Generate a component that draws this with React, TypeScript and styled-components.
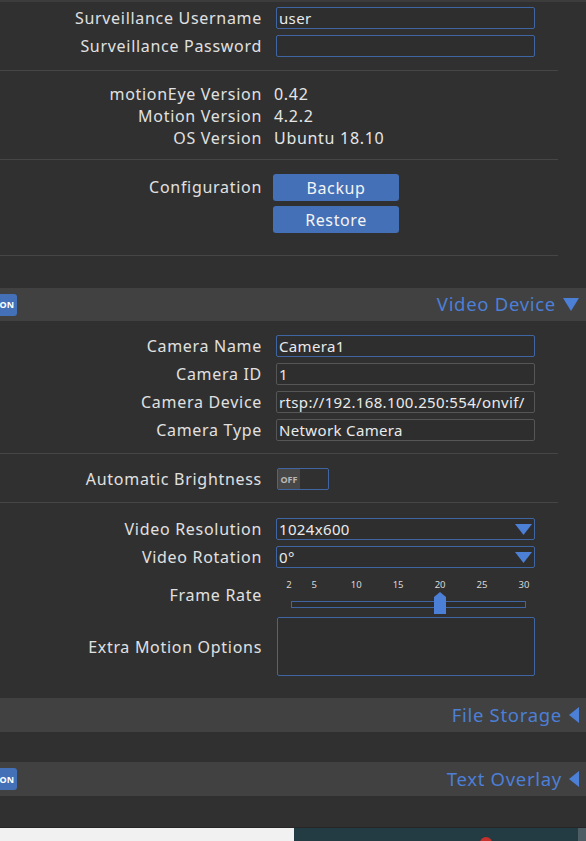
import React from "react";
import styled, { createGlobalStyle } from "styled-components";

const Global = createGlobalStyle`
  html, body {
    margin: 0;
    padding: 0;
    background: #303030;
    overflow: hidden;
  }
  body {
    font-family: "Noto Sans", "DejaVu Sans", sans-serif;
    color: #e2e2e2;
  }
`;

const Page = styled.div`
  width: 586px;
  height: 841px;
  display: flex;
  flex-direction: column;
  background: #303030;
  border-top: 2px solid #3c3c3c;
  box-sizing: border-box;
`;

const Group = styled.div<{ $top: number; $bottom: number; $line?: boolean; $gap?: number }>`
  display: flex;
  flex-direction: column;
  gap: ${(p) => p.$gap ?? 6}px;
  padding: ${(p) => p.$top}px 0 ${(p) => p.$bottom}px;
  margin-right: 28px;
  border-bottom: 1px solid ${(p) => (p.$line ? "#464646" : "transparent")};
`;

const Row = styled.div<{ $h?: number; $top?: boolean }>`
  display: grid;
  grid-template-columns: 262px 259px;
  column-gap: 14px;
  align-items: ${(p) => (p.$top ? "start" : "center")};
  min-height: ${(p) => p.$h ?? 22}px;
`;

const Label = styled.div<{ $lh?: number }>`
  text-align: right;
  font-size: 16px;
  letter-spacing: 0.7px;
  color: #e0e0e0;
  white-space: nowrap;
  line-height: ${(p) => p.$lh ?? 22}px;
`;

const Value = styled.div`
  font-size: 16px;
  letter-spacing: 0.7px;
  color: #e6e6e6;
  margin-left: -2px;
  line-height: 22px;
`;

const TextField = styled.div<{ $blue?: boolean; $h?: number }>`
  box-sizing: border-box;
  height: ${(p) => p.$h ?? 22}px;
  border: 1px solid ${(p) => (p.$blue ? "#3f66a3" : "#565656")};
  border-radius: 2px;
  background: #2e2e2e;
  font-size: 15px;
  letter-spacing: 0.35px;
  color: #eaeaea;
  padding: 0 2px;
  line-height: 20px;
  white-space: nowrap;
  overflow: hidden;
  display: flex;
  align-items: center;
  justify-content: space-between;
`;

const Buttons = styled.div`
  display: flex;
  flex-direction: column;
  gap: 5px;
  margin-left: -3px;
`;

const Button = styled.div`
  width: 126px;
  height: 27px;
  border-radius: 3px;
  background: #4470b7;
  color: #f4f4f4;
  font-size: 16px;
  letter-spacing: 0.6px;
  display: flex;
  align-items: center;
  justify-content: center;
`;

const Toggle = styled.div`
  box-sizing: border-box;
  width: 52px;
  height: 22px;
  border: 1px solid #3f66a3;
  border-radius: 2px;
  display: flex;
  margin-left: 1px;
`;

const ToggleOff = styled.div`
  width: 22px;
  background: #474747;
  color: #b8b8b8;
  font-size: 9px;
  font-weight: bold;
  display: flex;
  align-items: center;
  justify-content: center;
`;

const Header = styled.div<{ $gapBefore: number; $h?: number }>`
  margin-top: ${(p) => p.$gapBefore}px;
  height: ${(p) => p.$h ?? 34}px;
  background: #414141;
  display: flex;
  align-items: center;
  justify-content: space-between;
  padding-right: 7px;
`;

const OnBadge = styled.div`
  width: 17px;
  height: 22px;
  background: #4470b7;
  border-radius: 0 3px 3px 0;
  color: #fff;
  font-size: 9px;
  font-weight: bold;
  display: flex;
  align-items: center;
  justify-content: flex-end;
  padding-right: 3px;
  box-sizing: border-box;
  overflow: hidden;
`;

const HeaderTitle = styled.div`
  margin-left: auto;
  display: flex;
  align-items: center;
  gap: 7px;
  color: #4c7fd6;
  font-size: 18.5px;
  letter-spacing: 0.7px;
  line-height: 24px;
  margin-top: -1px;
`;

const SliderBox = styled.div`
  display: flex;
  flex-direction: column;
  padding: 0 9px 0 15px;
`;

const Ticks = styled.div`
  position: relative;
  height: 14px;
  margin-top: 1px;
  font-size: 9.5px;
  color: #d8d8d8;
`;

const Tick = styled.span`
  position: absolute;
  top: 0;
  transform: translateX(calc(-50% - 2px));
`;

const Track = styled.div`
  position: relative;
  margin-top: 9px;
  height: 7px;
  border: 1px solid #3f66a3;
  box-sizing: border-box;
  background: #2c2c2c;
`;

const Handle = styled.svg`
  position: absolute;
  top: -10px;
  transform: translateX(calc(-50% - 2px));
`;

const Footer = styled.div`
  margin-top: auto;
  height: 13px;
  display: flex;
  border-top: 1px solid #262626;
`;

const FooterLeft = styled.div`
  width: 294px;
  background: #f1f1f1;
`;

const FooterMid = styled.div`
  flex: 1;
  background: #233c44;
  position: relative;
`;

const FooterDot = styled.div`
  position: absolute;
  left: 186px;
  top: 9px;
  width: 12px;
  height: 12px;
  border-radius: 50%;
  background: #c8302c;
`;

const FooterRight = styled.div`
  width: 8px;
  background: #4d5d63;
`;

const Down = ({ w = 17, h = 11 }: { w?: number; h?: number }) => (
  <svg width={w} height={h} viewBox="0 0 17 11" preserveAspectRatio="none">
    <polygon points="0,0 17,0 8.5,11" fill="#4c7fd6" />
  </svg>
);

const Left = () => (
  <svg width="10" height="16" viewBox="0 0 10 16">
    <polygon points="10,0 10,16 0,8" fill="#4c7fd6" />
  </svg>
);

const ticks = [2, 5, 10, 15, 20, 25, 30];
const pct = (v: number) => ((v - 2) / 28) * 100;

export default function App() {
  return (
    <>
      <Global />
      <Page>
        <Group $top={5} $bottom={13} $line>
          <Row>
            <Label>Surveillance Username</Label>
            <TextField $blue>user</TextField>
          </Row>
          <Row>
            <Label>Surveillance Password</Label>
            <TextField $blue />
          </Row>
        </Group>

        <Group $top={12} $bottom={10} $gap={0} $line>
          <Row>
            <Label>motionEye Version</Label>
            <Value>0.42</Value>
          </Row>
          <Row>
            <Label>Motion Version</Label>
            <Value>4.2.2</Value>
          </Row>
          <Row>
            <Label>OS Version</Label>
            <Value>Ubuntu 18.10</Value>
          </Row>
        </Group>

        <Group $top={14} $bottom={22} $line>
          <Row $top>
            <Label $lh={27}>Configuration</Label>
            <Buttons>
              <Button>Backup</Button>
              <Button>Restore</Button>
            </Buttons>
          </Row>
        </Group>

        <Header $gapBefore={32} $h={33}>
          <OnBadge>ON</OnBadge>
          <HeaderTitle>
            Video Device <Down w={16} h={13} />
          </HeaderTitle>
        </Header>

        <Group $top={14} $bottom={12} $line>
          <Row>
            <Label>Camera Name</Label>
            <TextField $blue>Camera1</TextField>
          </Row>
          <Row>
            <Label>Camera ID</Label>
            <TextField>1</TextField>
          </Row>
          <Row>
            <Label>Camera Device</Label>
            <TextField>rtsp://192.168.100.250:554/onvif/</TextField>
          </Row>
          <Row>
            <Label>Camera Type</Label>
            <TextField>Network Camera</TextField>
          </Row>
        </Group>

        <Group $top={14} $bottom={12} $line>
          <Row>
            <Label>Automatic Brightness</Label>
            <Toggle>
              <ToggleOff>OFF</ToggleOff>
            </Toggle>
          </Row>
        </Group>

        <Group $top={15} $bottom={21}>
          <Row>
            <Label>Video Resolution</Label>
            <TextField $blue>
              1024x600 <Down />
            </TextField>
          </Row>
          <Row>
            <Label>Video Rotation</Label>
            <TextField $blue>
              0° <Down />
            </TextField>
          </Row>
          <Row $h={40} style={{ marginTop: -2 }}>
            <Label style={{ marginTop: 5 }}>Frame Rate</Label>
            <SliderBox>
              <Ticks>
                {ticks.map((t) => (
                  <Tick key={t} style={{ left: `${pct(t)}%` }}>
                    {t}
                  </Tick>
                ))}
              </Ticks>
              <Track>
                <Handle
                  width="12"
                  height="22"
                  viewBox="0 0 12 22"
                  style={{ left: `${pct(20)}%` }}
                >
                  <polygon points="6,0 12,5 12,22 0,22 0,5" fill="#4c7fd6" />
                </Handle>
              </Track>
            </SliderBox>
          </Row>
          <Row $h={59} style={{ marginTop: -1 }}>
            <Label>Extra Motion Options</Label>
            <TextField $blue $h={59} style={{ marginLeft: 1 }} />
          </Row>
        </Group>

        <Header $gapBefore={0}>
          <HeaderTitle>
            File Storage <Left />
          </HeaderTitle>
        </Header>

        <Header $gapBefore={30}>
          <OnBadge>ON</OnBadge>
          <HeaderTitle>
            Text Overlay <Left />
          </HeaderTitle>
        </Header>

        <Footer>
          <FooterLeft />
          <FooterMid>
            <FooterDot />
          </FooterMid>
          <FooterRight />
        </Footer>
      </Page>
    </>
  );
}
